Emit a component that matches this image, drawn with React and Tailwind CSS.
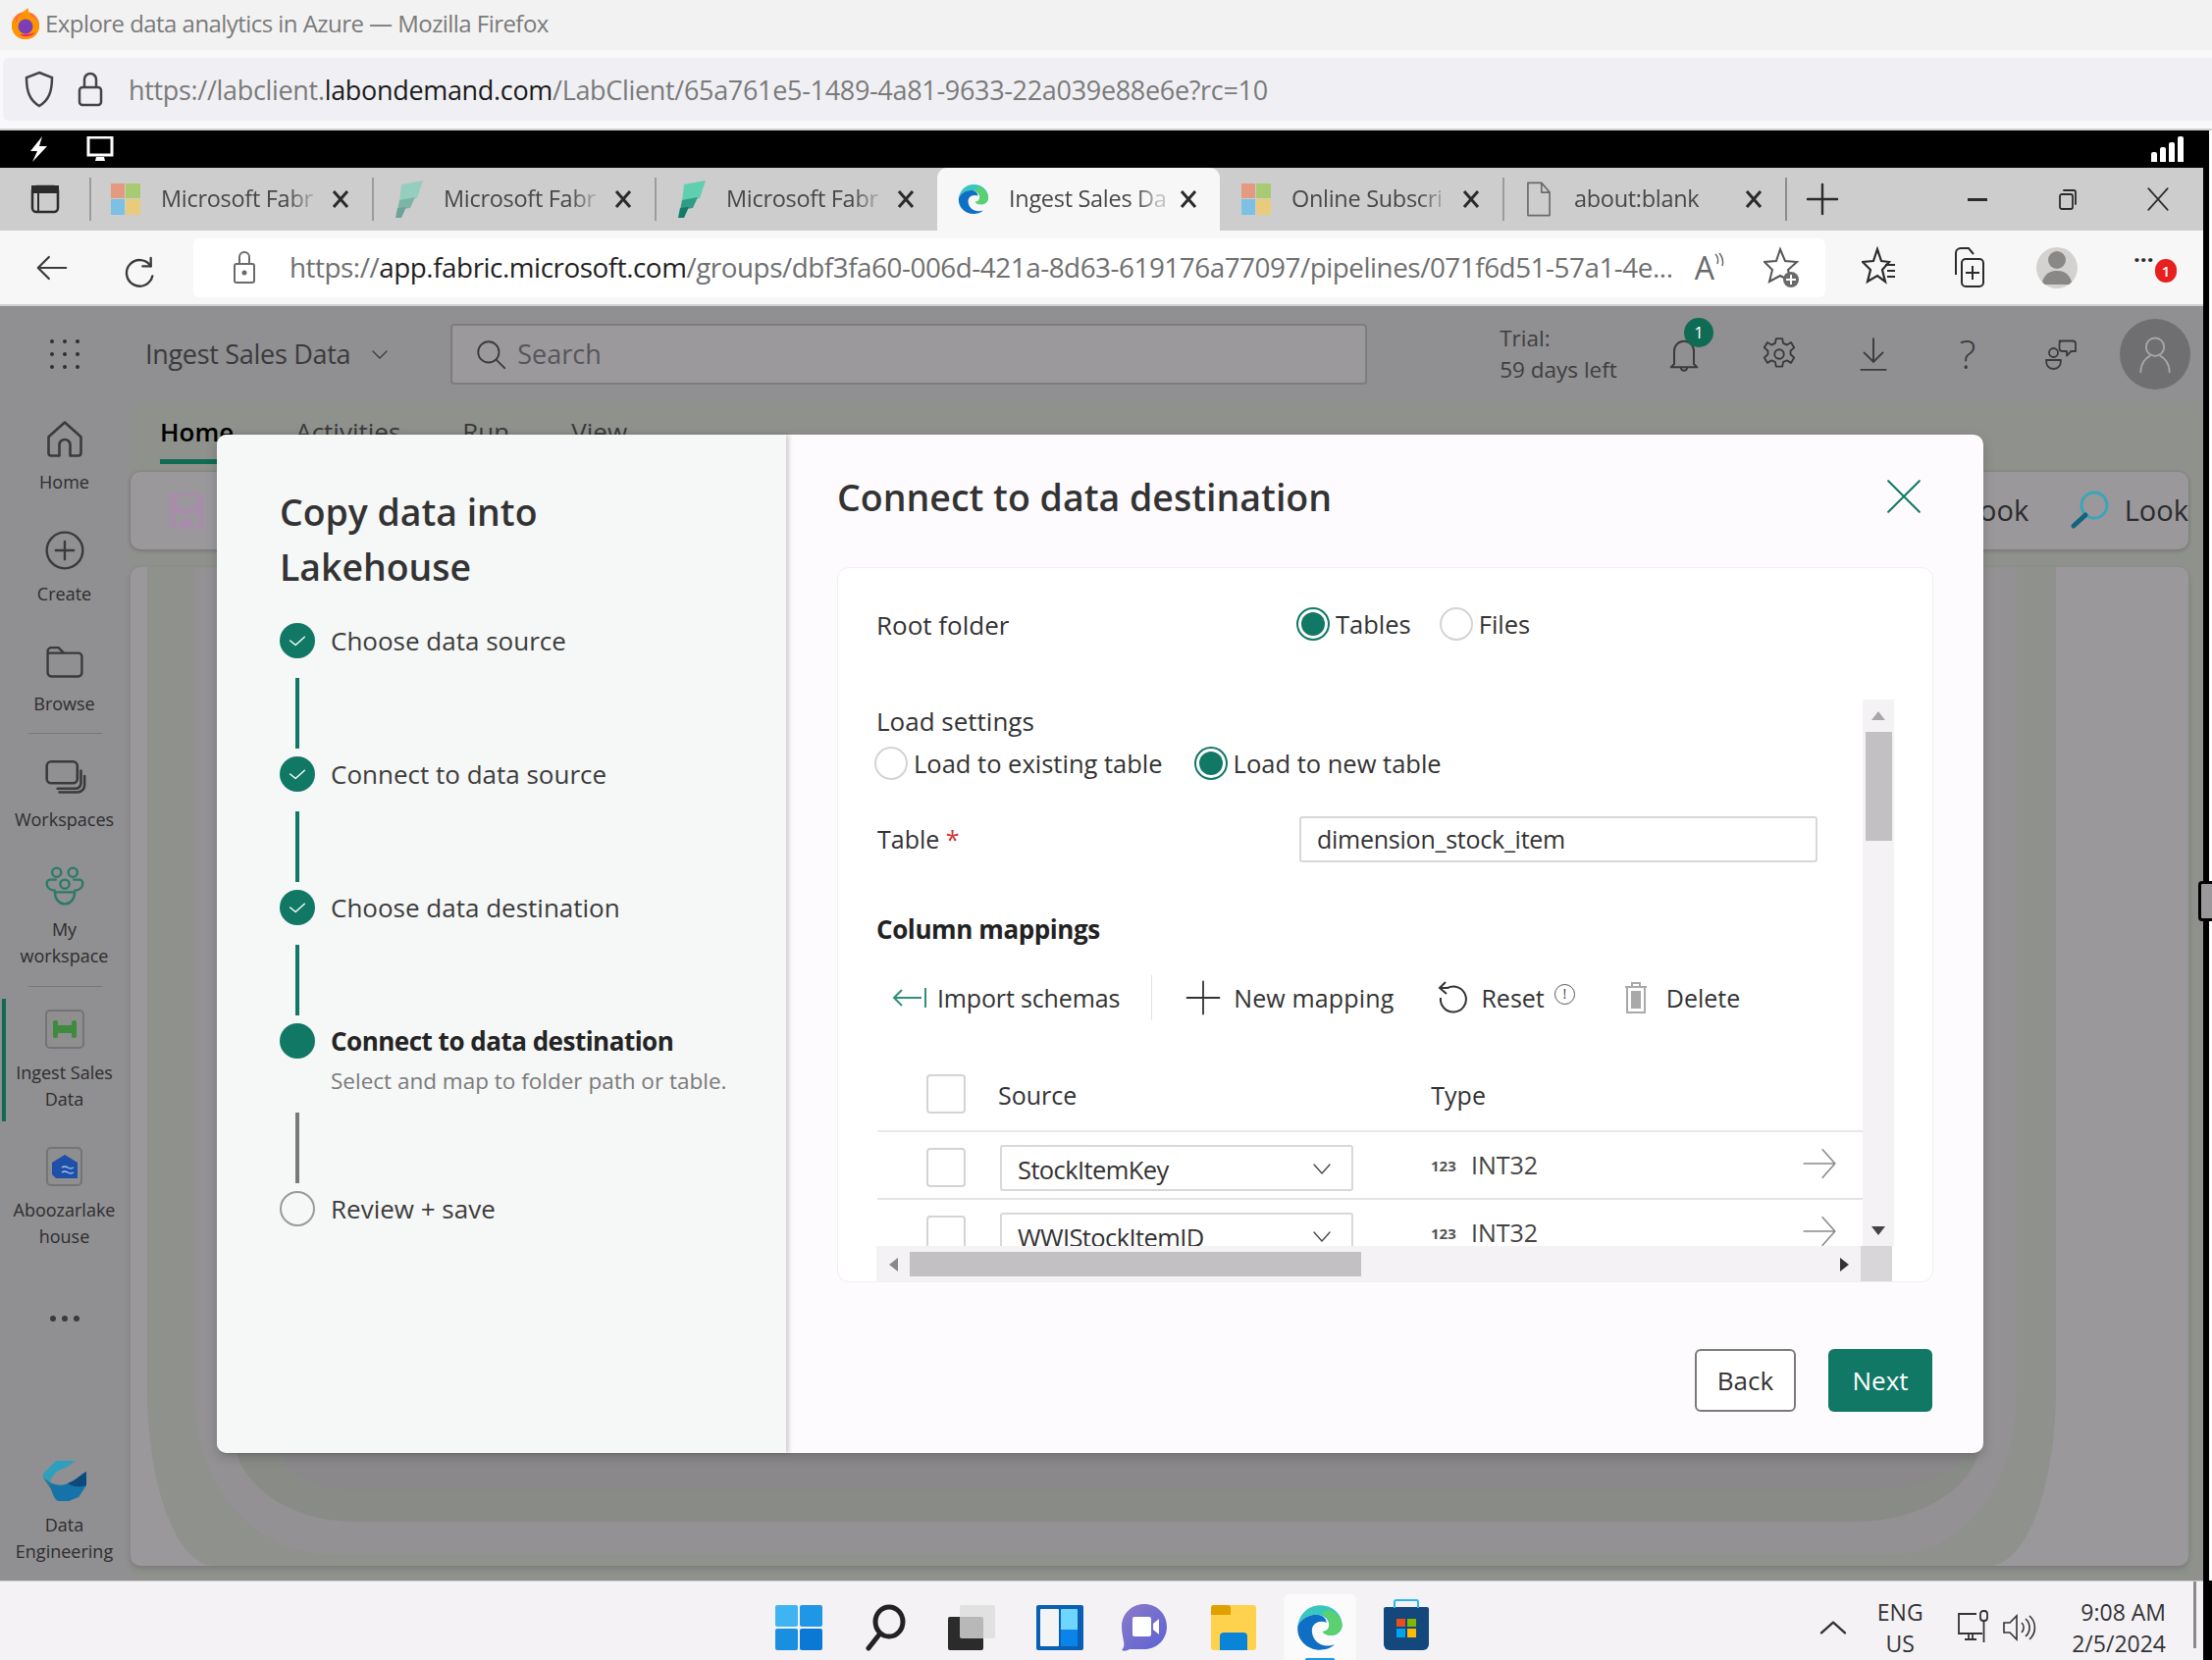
import React from 'react'

const font = "font-['Open_Sans','Noto_Sans',sans-serif]"

// small helpers for the browser chrome logos
const MsLogo = () => (
  <svg width="30" height="32" viewBox="0 0 30 32">
    <rect x="0" y="0" width="14" height="15" fill="#e49a80" />
    <rect x="15" y="0" width="15" height="15" fill="#a8cb72" />
    <rect x="0" y="16" width="14" height="16" fill="#7cc0e4" />
    <rect x="15" y="16" width="15" height="16" fill="#e9cb7c" />
  </svg>
)

const FabricLogo = ({ faded }) => (
  <svg width="30" height="38" viewBox="0 0 30 38" className={faded ? 'opacity-50' : ''}>
    <path d="M8 4 L30 0 L24 18 L6 22 Z" fill="#5fcfb0" />
    <path d="M6 20 L22 17 L17 28 L4 30 Z" fill="#2f9c84" />
    <path d="M4 28 L13 27 L8 38 L2 38 Z" fill="#127a68" />
  </svg>
)

const EdgeLogo = ({ size = 36 }) => (
  <svg width={size} height={size} viewBox="0 0 36 36">
    <path d="M18 1c10 0 17 7 17 15 0 5-4 8-8 8-3 0-6-1-7-3 3 0 5-2 5-5 0-5-5-8-10-8C9 8 3 12 1 17 2 8 9 1 18 1z" fill="#38c7c0" />
    <path d="M27 5c5 3 8 7 8 11 0 5-4 8-8 8-3 0-6-1-7-3 3 0 5-2 5-5 0-4-2-7-6-9 3-2 6-3 8-2z" fill="#5ad06f" />
    <path d="M1 17C3 12 9 8 15 8c5 0 8 3 8 6-6-2-12 1-11 8 1 7 8 12 17 9-3 3-7 4-11 4C8 35 0 27 1 17z" fill="#0f6fc4" />
  </svg>
)

const CloseX = () => (
  <svg width="20" height="22" viewBox="0 0 20 22" stroke="#2b2b2b" strokeWidth="3" fill="none" className="shrink-0">
    <path d="M3 3 L17 19 M17 3 L3 19" />
  </svg>
)

const Line = ({ children, className = '', d, w = 34, h = 34, vb = '0 0 24 24', sw = 1.5, color = '#4a4a4c' }) => (
  <svg width={w} height={h} viewBox={vb} fill="none" stroke={color} strokeWidth={sw} strokeLinecap="round" strokeLinejoin="round" className={className}>
    {d ? <path d={d} /> : children}
  </svg>
)

const tabs = [
  { title: 'Microsoft Fabr', logo: <MsLogo /> },
  { title: 'Microsoft Fabr', logo: <FabricLogo faded /> },
  { title: 'Microsoft Fabr', logo: <FabricLogo /> },
  { title: 'Ingest Sales Da', logo: <EdgeLogo size={32} />, active: true },
  { title: 'Online Subscri', logo: <MsLogo /> },
  {
    title: 'about:blank',
    logo: <Line w={28} h={36} vb="0 0 20 26" sw={1.2} color="#6a6a6a" d="M2 1h10l6 7v17H2zM12 1v7h6" />,
  },
]

const TabBar = () => (
  <div className="h-[64px] bg-[#cdcdcd] flex items-center">
    <div className="w-[91px] flex justify-center">
      <svg width="30" height="30" viewBox="0 0 30 30" fill="none" stroke="#2b2b2b">
        <rect x="2" y="2" width="26" height="26" rx="4" strokeWidth="2.5" />
        <rect x="2" y="2" width="26" height="6" fill="#2b2b2b" strokeWidth="2" />
        <path d="M8 8v20" strokeWidth="2" />
      </svg>
    </div>
    {tabs.map((t, i) => (
      <div
        key={i}
        className={`w-[288px] h-full flex items-center pl-[20px] pr-[22px] relative ${t.active ? 'bg-[#f7f7f7] rounded-t-[10px]' : ''}`}
      >
        {!t.active && !tabs[i - 1]?.active && <div className="absolute left-0 top-[10px] w-[2px] h-[44px] bg-[#9c9c9c]" />}
        <span className="w-[34px] flex justify-center shrink-0">{t.logo}</span>
        <span className="ml-[19px] flex-1 text-[23.5px] tracking-[-0.3px] text-[#48484a] whitespace-nowrap [mask-image:linear-gradient(to_right,black_75%,rgba(0,0,0,0.3)_88%)]">
          {t.title}
        </span>
        <CloseX />
      </div>
    ))}
    <div className="w-[2px] h-[44px] bg-[#8c8c8c]" />
    <div className="ml-[18px]">
      <Line w={36} h={36} sw={1.6} color="#2b2b2b" d="M12 2v20M2 12h20" />
    </div>
    <div className="ml-auto flex items-center">
      <div className="w-[92px] flex justify-center">
        <div className="w-[20px] h-[3px] bg-[#2b2b2b]" />
      </div>
      <div className="w-[92px] flex justify-center">
        <Line w={24} h={26} sw={1.8} color="#2b2b2b">
          <rect x="4" y="7" width="13" height="15" rx="2" />
          <path d="M8 3h10a2 2 0 0 1 2 2v12" />
        </Line>
      </div>
      <div className="w-[92px] flex justify-center">
        <Line w={26} h={28} sw={1.6} color="#2b2b2b" d="M3 2l18 20M21 2L3 22" />
      </div>
    </div>
  </div>
)

const AddressBar = () => (
  <div className="h-[77px] bg-[#f7f7f7] flex items-center border-b-2 border-b-[#d2d2d2]">
    <div className="w-[197px] flex items-center pl-[34px] gap-[50px]">
      <Line w={38} h={38} sw={1.4} color="#3a3a3a" d="M21 12H3M10 5l-7 7 7 7" />
      <Line w={40} h={40} sw={1.4} color="#3a3a3a">
        <path d="M19 6v5h-5" />
        <path d="M19 11a8 8 0 1 0 1 6" />
      </Line>
    </div>
    <div className="w-[1663px] h-[60px] bg-white rounded-[6px] flex items-center">
      <div className="w-[98px] pl-[40px]">
        <svg width="24" height="34" viewBox="0 0 24 34" fill="none" stroke="#6a6a6a" strokeWidth="2">
          <rect x="2" y="13" width="20" height="19" rx="2" />
          <path d="M7 13V6a5 5 0 0 1 10 0v7" />
          <circle cx="12" cy="22" r="1.5" fill="#6a6a6a" />
        </svg>
      </div>
      <div className="text-[27.8px] tracking-[-0.45px] text-[#6f6f6f] whitespace-nowrap">
        https://<span className="text-[#1f1f1f]">app.fabric.microsoft.com</span>/groups/dbf3fa60-006d-421a-8d63-619176a77097/pipelines/071f6d51-57a1-4e...
      </div>
      <div className="ml-auto flex items-center gap-[38px] pr-[25px]">
        <span className="flex items-start text-[32px] leading-none text-[#6a6a6a]">
          A
          <svg width="12" height="18" viewBox="0 0 12 18" fill="none" stroke="#6a6a6a" strokeWidth="1.5">
            <path d="M1 2q4 4 2 10M5 1q5 6 3 13" />
          </svg>
        </span>
        <svg width="38" height="44" viewBox="0 0 38 44" fill="none" stroke="#555" strokeWidth="2">
          <path d="M17 3l5 12 12 1-9 8 3 12-11-6-11 6 3-12-8-8 12-1z" />
          <circle cx="28" cy="34" r="8" fill="#6a6a6a" stroke="none" />
          <path d="M28 29v10M23 34h10" stroke="#fff" />
        </svg>
      </div>
    </div>
    <div className="flex-1 flex items-center gap-[50px] pl-[37px]">
      <svg width="38" height="44" viewBox="0 0 38 44" fill="none" stroke="#2b2b2b" strokeWidth="2.2">
        <path d="M16 3l4 12 8 1-7 8 3 12-8-6-10 6 3-12-8-8 11-1z" />
        <path d="M24 19h10M26 25h8M26 31h8" />
      </svg>
      <svg width="40" height="46" viewBox="0 0 40 46" fill="none" stroke="#2b2b2b" strokeWidth="2">
        <path d="M8 30V8a5 5 0 0 1 5-5h8l5 6" />
        <rect x="14" y="14" width="22" height="28" rx="4" />
        <path d="M25 21v14M18 28h14" />
      </svg>
      <div className="w-[42px] h-[42px] rounded-full bg-[#d4d2d0] flex flex-col items-center justify-center overflow-hidden">
        <div className="w-[18px] h-[18px] rounded-full bg-[#8a8886]" />
        <div className="w-[30px] h-[14px] rounded-t-full bg-[#8a8886] mt-[2px]" />
      </div>
      <div className="relative w-[44px] h-[30px] ml-[5px]">
        <span className="absolute left-[2px] top-[-6px] text-[24px] font-bold leading-none text-[#2b2b2b]">···</span>
        <span className="absolute right-[-2px] top-[6px] w-[22px] h-[24px] rounded-full bg-[#e81f1f] text-white text-[15px] leading-[24px] text-center font-semibold">1</span>
      </div>
    </div>
  </div>
)

const NavItem = ({ icon, label, className = '' }) => (
  <div className={`flex flex-col items-center pr-[2px] ${className}`}>
    <div className="h-[44px] flex items-center justify-center">{icon}</div>
    <div className="mt-[9px] text-[18px] leading-[27px] text-[#2d2d2f] text-center w-[131px]">
      {label.map((l) => (
        <div key={l}>{l}</div>
      ))}
    </div>
  </div>
)

const Sidebar = () => (
  <div className="relative w-[133px] h-full flex flex-col pt-[15px] shrink-0">
    <NavItem
      label={['Home']}
      icon={<Line w={44} h={44} sw={1.4} color="#3a3a3c" d="M3 11l9-8 9 8v9a1.5 1.5 0 0 1-1.5 1.5H15v-6a3 3 0 0 0-6 0v6H4.500A1.500 1.500 0 0 1 3 20z" />}
    />
    <NavItem
      className="mt-[34px]"
      label={['Create']}
      icon={
        <Line w={44} h={44} sw={1.3} color="#3a3a3c">
          <circle cx="12" cy="12" r="10" />
          <path d="M12 7v10M7 12h10" />
        </Line>
      }
    />
    <NavItem
      className="mt-[32px]"
      label={['Browse']}
      icon={<Line w={44} h={44} sw={1.3} color="#3a3a3c" d="M2.500 7a2 2 0 0 1 2-2h4l3 3h8a2 2 0 0 1 2 2v9a2 2 0 0 1-2 2h-15a2 2 0 0 1-2-2zM2.500 8h9" />}
    />
    <div className="mt-[16px] mx-[29px] h-px bg-[#77767a]" />
    <NavItem
      className="mt-[21px]"
      label={['Workspaces']}
      icon={
        <Line w={44} h={44} sw={1.4} color="#3a3a3c">
          <rect x="2" y="4" width="17" height="12" rx="2.500" />
          <path d="M21 9v7a3 3 0 0 1-3 3H8" />
          <path d="M23 12v5a4 4 0 0 1-4 4H9" />
        </Line>
      }
    />
    <NavItem
      className="mt-[32px]"
      label={['My', 'workspace']}
      icon={
        <Line w={44} h={44} sw={1.3} color="#2b7a68">
          <circle cx="7.500" cy="4.500" r="2.500" />
          <circle cx="16.500" cy="4.500" r="2.500" />
          <circle cx="12" cy="11" r="2.500" />
          <path d="M7 8.500H4a2 2 0 0 0-2 2c0 2.500 2 4 4.500 4M17 8.500h3a2 2 0 0 1 2 2c0 2.500-2 4-4.500 4" />
          <path d="M6.500 15.500h11c0 4-2.500 6.500-5.500 6.500s-5.500-2.500-5.500-6.500z" />
        </Line>
      }
    />
    <div className="mt-[17px] mx-[29px] h-px bg-[#77767a]" />
    <NavItem
      className="mt-[21px]"
      label={['Ingest Sales', 'Data']}
      icon={
        <div className="w-[40px] h-[40px] rounded-[5px] border-2 border-[#747476] bg-[#8f8f8f] flex items-center justify-center">
          <svg width="26" height="20" viewBox="0 0 26 20" fill="#3f8a3f">
            <rect x="1" y="1" width="5" height="18" rx="2" />
            <rect x="20" y="1" width="5" height="18" rx="2" />
            <rect x="5" y="6" width="16" height="8" />
          </svg>
        </div>
      }
    />
    <NavItem
      className="mt-[33px]"
      label={['Aboozarlake', 'house']}
      icon={
        <div className="w-[37px] h-[40px] rounded-[5px] border-2 border-[#747476] bg-[#8f8f8f] flex items-center justify-center">
          <svg width="28" height="26" viewBox="0 0 28 26">
            <path d="M1 9L14 1l13 8v16H5l-4-4z" fill="#1f4fa8" />
            <path d="M11 14q3-2 6 0t6 0M11 19q3-2 6 0t6 0" stroke="#9cc4ea" strokeWidth="1.500" fill="none" />
          </svg>
        </div>
      }
    />
    <div className="mt-[67px] flex justify-center gap-[6px] pr-[2px]">
      <span className="w-[6px] h-[6px] rounded-full bg-[#3a3a3c]" />
      <span className="w-[6px] h-[6px] rounded-full bg-[#3a3a3c]" />
      <span className="w-[6px] h-[6px] rounded-full bg-[#3a3a3c]" />
    </div>
    <NavItem
      className="mt-auto mb-[16px]"
      label={['Data', 'Engineering']}
      icon={
        <svg width="46" height="44" viewBox="0 0 46 44">
          <path d="M14 1h20L24 8C16 10 10 15 8 23L1 18V14z" fill="#2f9fbe" />
          <path d="M1 18l7 5c1 5 3 9 6 12l-1 1z" fill="#26788f" />
          <path d="M45 12v14l-8 12-10 4H16C12 40 9 32 8 23c6 3 12 4 18 1 6-2 11-7 19-12z" fill="#1573a8" />
          <path d="M45 12v14c-6 2-13 2-19-2 6-2 11-7 19-12z" fill="#0c4a7e" />
        </svg>
      }
    />
    <div className="absolute left-[2px] top-[608px] w-[4px] h-[125px] bg-[#0f6b54]" />
  </div>
)

const Workspace = () => (
  <div className="flex-1 h-full flex flex-col bg-[#8f918d] pr-[15px]">
    <div className="h-[71px] pl-[30px] flex items-start pt-[11px] gap-[63px] text-[26px] text-[#3a3a3c]">
      <div className="relative font-semibold text-black">
        Home
        <div className="absolute left-0 top-[47px] w-[76px] h-[5px] bg-[#0f6b54]" />
      </div>
      <div>Activities</div>
      <div>Run</div>
      <div>View</div>
    </div>
    <div className="h-[79px] rounded-[10px] bg-[#9a989b] flex items-center shadow-[0_1px_4px_rgba(0,0,0,0.25)]">
      <div className="ml-[39px]">
        <svg width="36" height="36" viewBox="0 0 36 36" fill="#a68ea9">
          <path d="M0 0h36v36H4l-4-4z" />
          <rect x="9" y="3" width="18" height="11" fill="#9a989b" />
          <rect x="7" y="21" width="22" height="12" fill="#9a989b" />
          <rect x="12" y="25" width="12" height="8" fill="#a68ea9" />
        </svg>
      </div>
      <div className="ml-auto flex items-center text-[29px] text-[#2b2b2d] overflow-hidden w-[213px] mt-[-2px]">
        <span className="w-[110px]">ook</span>
        <svg width="42" height="42" viewBox="0 0 42 42" fill="none" className="shrink-0">
          <circle cx="25" cy="16" r="13" stroke="#38a6bb" strokeWidth="3" />
          <path d="M16 26L4 37" stroke="#12647c" strokeWidth="5" strokeLinecap="round" />
        </svg>
        <span className="ml-[14px] whitespace-nowrap">Look</span>
      </div>
    </div>
    <div className="relative mt-[18px] flex-1 mb-[15px] rounded-[10px] bg-[#9a989b] overflow-hidden shadow-[0_3px_6px_rgba(0,0,0,0.15)]">
      {/* soft background bands behind the dialog */}
      <div className="absolute left-[17px] right-[135px] top-0 bottom-0 rounded-bl-[68px_180px] rounded-br-[68px_180px] bg-[#8f918d]" />
      <div className="absolute left-[65px] right-[175px] top-0 bottom-[12px] rounded-bl-[135px_160px] rounded-br-[122px_160px] bg-[#939193]" />
      <div className="absolute left-[105px] right-[210px] top-0 bottom-[45px] rounded-bl-[122px_90px] rounded-br-[129px_90px] bg-[#898b87]" />
      <div className="absolute left-[153px] right-[230px] top-0 bottom-[78px] rounded-bl-[74px_40px] rounded-br-[100px_40px] bg-[#8a888a]" />
    </div>
  </div>
)

const Step = ({ label, sub, state }) => (
  <div className="flex items-start">
    <div className="w-[36px] flex justify-center shrink-0">
      {state === 'done' && (
        <div className="w-[36px] h-[36px] rounded-full bg-[#117865] flex items-center justify-center">
          <Line w={22} h={22} sw={1.500} color="#ffffff" d="M4 12l6 5 10-9" />
        </div>
      )}
      {state === 'active' && <div className="w-[36px] h-[36px] rounded-full bg-[#117865]" />}
      {state === 'todo' && <div className="w-[36px] h-[36px] rounded-full border-2 border-[#9a9a9a]" />}
    </div>
    <div className="ml-[16px]">
      <div className={`text-[26px] leading-[36px] ${state === 'active' ? 'font-bold text-[#242424] tracking-[-0.5px]' : 'text-[#3c3c3c]'}`}>{label}</div>
      {sub && <div className="mt-[9px] text-[22.5px] leading-[28px] text-[#7a7a7a] whitespace-nowrap">{sub}</div>}
    </div>
  </div>
)

const Connector = ({ className, color = 'bg-[#117865]' }) => (
  <div className={`ml-[16px] w-[4px] h-[72px] ${color} ${className}`} />
)

const StepPanel = () => (
  <div className="w-[580px] shrink-0 h-full bg-[#f6f7f7] rounded-l-[10px] pl-[64px] pt-[51px] shadow-[3px_0_4px_rgba(0,0,0,0.18)] relative">
    <div className="text-[37.4px] leading-[56px] font-semibold text-[#333]">
      Copy data into
      <br />
      Lakehouse
    </div>
    <div className="mt-[29px]">
      <Step state="done" label="Choose data source" />
      <Connector className="mt-[20px] mb-[8px]" />
      <Step state="done" label="Connect to data source" />
      <Connector className="mt-[20px] mb-[8px]" />
      <Step state="done" label="Choose data destination" />
      <Connector className="mt-[20px] mb-[8px]" />
      <Step state="active" label="Connect to data destination" sub="Select and map to folder path or table." />
      <Connector className="mt-[18px] mb-[8px]" color="bg-[#7a7a7a]" />
      <Step state="todo" label="Review + save" />
    </div>
  </div>
)

const Radio = ({ label, checked }) => (
  <div className="flex items-center">
    {checked ? (
      <div className="w-[34px] h-[34px] rounded-full border-[2px] border-[#117865] bg-white flex items-center justify-center">
        <div className="w-[24px] h-[24px] rounded-full bg-[#117865]" />
      </div>
    ) : (
      <div className="w-[34px] h-[34px] rounded-full border-[2px] border-[#d4d4d4] bg-white" />
    )}
    <span className="ml-[6px] text-[25.5px] text-[#333]">{label}</span>
  </div>
)

const Checkbox = () => <div className="w-[40px] h-[40px] rounded-[4px] border-2 border-[#d4d4d4] bg-white shrink-0" />

const MappingRow = ({ name, clipped }) => (
  <div className={`h-[69px] flex items-start shrink-0 ${clipped ? '' : 'border-b-2 border-b-[#e4e4e4]'}`}>
    <div className="ml-[50px] mt-[16px]">
      <Checkbox />
    </div>
    <div className="ml-[35px] mt-[13px] w-[360px] h-[47px] rounded-[3px] border-2 border-[#d8d8d8] bg-white flex items-center pl-[16px] pr-[18px] text-[25.5px] text-[#333]">
      <span className="tracking-[-0.6px] mt-[2px]">{name}</span>
      <span className="ml-auto">
        <Line w={24} h={24} sw={1.300} color="#444" d="M4 8l8 9 8-9" />
      </span>
    </div>
    <div className="ml-[77px] mt-[15px] flex items-center text-[25px] text-[#444]">
      <span className="text-[15px] font-bold text-[#555] w-[43px] pl-[2px]">123</span>
      <span>INT32</span>
    </div>
    <div className="ml-auto mr-[25px] mt-[13px]">
      <Line w={38} h={38} sw={1} color="#8a8a8a" d="M2 12h20M14 3l8 9-8 9" />
    </div>
  </div>
)

const Toolbar = () => (
  <div className="mt-[31px] h-[44px] flex items-center text-[25px] text-[#333]">
    <div className="ml-[15px]">
      <svg width="36" height="22" viewBox="0 0 36 22" fill="none" stroke="#2f8f78" strokeWidth="2">
        <path d="M34 1v20M30 11H2M10 3l-8 8 8 8" />
      </svg>
    </div>
    <span className="ml-[10px] tracking-[-0.15px]">Import schemas</span>
    <div className="ml-[32px] w-px h-[46px] bg-[#e2e2e2]" />
    <div className="ml-[34px]">
      <Line w={36} h={36} sw={1.200} color="#333" d="M12 1v22M1 12h22" />
    </div>
    <span className="ml-[13px] tracking-[0.15px]">New mapping</span>
    <div className="ml-[43px]">
      <svg width="34" height="36" viewBox="0 0 34 36" fill="none" stroke="#333" strokeWidth="2">
        <path d="M4 8h8a13 13 0 1 1-7 10M10 2L4 8l7 6" />
      </svg>
    </div>
    <span className="ml-[12px]">Reset</span>
    <div className="ml-[10px] mt-[-8px] w-[21px] h-[21px] rounded-full border border-[#555] text-[14px] leading-[18px] text-center text-[#444]">!</div>
    <div className="ml-[48px]">
      <svg width="28" height="34" viewBox="0 0 28 34" fill="none" stroke="#a9a9a9" strokeWidth="2">
        <path d="M3 6h22M10 6V2h8v4M5 6v26h18V6" />
        <rect x="9" y="10" width="10" height="18" fill="#a9a9a9" stroke="none" />
      </svg>
    </div>
    <span className="ml-[17px]">Delete</span>
  </div>
)

const Card = () => (
  <div className="mt-[46px] w-[1117px] h-[729px] rounded-[12px] bg-white border border-[#f1eff1] flex flex-col overflow-hidden shrink-0">
    <div className="h-[134px] pl-[39px] pt-[38px] flex items-start shrink-0">
      <div className="w-[431px] text-[26px] leading-[40px] text-[#333]">Root folder</div>
      <div className="flex items-center gap-[29px] ml-[-3px]">
        <Radio label="Tables" checked />
        <Radio label="Files" />
      </div>
    </div>
    <div className="flex h-[557px] pl-[26px] shrink-0">
      <div className="w-[1018px] h-full overflow-hidden">
        <div className="pl-[13px] pt-[5px] text-[26px] leading-[34px] text-[#333]">Load settings</div>
        <div className="pl-[11px] mt-[7px] flex items-center gap-[32px]">
          <Radio label="Load to existing table" />
          <Radio label="Load to new table" checked />
        </div>
        <div className="pl-[14px] mt-[35px] flex items-center">
          <div className="w-[430px] text-[25px] text-[#333]">
            Table <span className="text-[#d13438]">*</span>
          </div>
          <div className="w-[528px] h-[47px] rounded-[3px] border-2 border-[#d8d8d8] flex items-center pl-[16px] text-[25px] text-[#333] tracking-[-0.25px]">
            dimension_stock_item
          </div>
        </div>
        <div className="pl-[13px] mt-[51px] text-[26px] leading-[34px] font-bold text-[#222] tracking-[-0.4px]">Column mappings</div>
        <div className="pl-[14px]">
          <Toolbar />
        </div>
        <div className="ml-[14px]">
          <div className="mt-[39px] h-[76px] border-b-2 border-b-[#e8e8e8] flex items-start text-[25px] text-[#333]">
            <div className="ml-[50px] mt-[17px]">
              <Checkbox />
            </div>
            <span className="ml-[33px] mt-[20px]">Source</span>
            <span className="ml-[361px] mt-[20px]">Type</span>
          </div>
          <MappingRow name="StockItemKey" />
          <MappingRow name="WWIStockItemID" clipped />
        </div>
      </div>
      <div className="w-[32px] h-full bg-[#f5f2f6] flex flex-col items-center pt-[12px] shrink-0">
        <div className="w-0 h-0 border-x-[7px] border-x-transparent border-b-[9px] border-b-[#a8a8a8]" />
        <div className="mt-[12px] w-[27px] h-[111px] bg-[#c2c0c3]" />
        <div className="mt-auto mb-[11px] w-0 h-0 border-x-[7px] border-x-transparent border-t-[9px] border-t-[#444]" />
      </div>
    </div>
    <div className="h-[37px] ml-[39px] mr-[41px] flex items-center bg-[#f5f2f6] shrink-0">
      <div className="w-[34px] flex justify-center">
        <div className="w-0 h-0 border-y-[7px] border-y-transparent border-r-[9px] border-r-[#888]" />
      </div>
      <div className="w-[460px] h-[25px] bg-[#c2c0c3]" />
      <div className="flex-1 flex justify-end pr-[12px]">
        <div className="w-0 h-0 border-y-[7px] border-y-transparent border-l-[9px] border-l-[#333]" />
      </div>
      <div className="w-[32px] h-full bg-[#d8d6d8]" />
    </div>
  </div>
)

const Dialog = () => (
  <div className={`absolute left-[221px] top-[443px] w-[1800px] h-[1038px] rounded-[10px] bg-[#fdfbfd] flex shadow-[0_4px_12px_rgba(0,0,0,0.18)] ${font}`}>
    <StepPanel />
    <div className="flex-1 flex flex-col pl-[52px] pt-[39px]">
      <div className="h-[50px] flex items-center justify-between pr-[62px]">
        <h1 className="text-[37.5px] leading-[50px] font-semibold text-[#333]">Connect to data destination</h1>
        <Line className="mt-[-3px]" w={38} h={38} sw={1.300} color="#117865" d="M2 2l20 20M22 2L2 22" />
      </div>
      <Card />
      <div className="mt-[68px] flex justify-end gap-[33px] pr-[52px]">
        <button className="w-[103px] h-[64px] rounded-[6px] border-2 border-[#7a7a7a] bg-white text-[26px] text-[#333]">Back</button>
        <button className="w-[106px] h-[64px] rounded-[6px] bg-[#117865] text-[26px] text-white">Next</button>
      </div>
    </div>
  </div>
)

const Taskbar = () => (
  <div className="h-[81px] pt-[13px] bg-[#f5f2f6] flex items-center relative border-t border-t-[#cfcfcf]">
    <div className="ml-[790px] flex items-center gap-[42px]">
      {/* start */}
      <svg width="48" height="46" viewBox="0 0 48 46">
        <rect width="23" height="22" rx="2" fill="#3fb4f0" />
        <rect x="25" width="23" height="22" rx="2" fill="#1f96e6" />
        <rect y="24" width="23" height="22" rx="2" fill="#1a8fe0" />
        <rect x="25" y="24" width="23" height="22" rx="2" fill="#0a78d4" />
      </svg>
      {/* search */}
      <svg width="44" height="48" viewBox="0 0 44 48" fill="none">
        <ellipse cx="26" cy="18" rx="14" ry="15" stroke="#222" strokeWidth="5" fill="#f5f2f6" />
        <path d="M16 31L5 45" stroke="#222" strokeWidth="5" strokeLinecap="round" />
      </svg>
      {/* task view */}
      <div className="relative w-[48px] h-[46px]">
        <div className="absolute left-0 bottom-0 w-[36px] h-[34px] rounded-[2px] bg-[#2b2b2b]" />
        <div className="absolute right-0 top-0 w-[36px] h-[34px] rounded-[2px] bg-[#dcdcdc]/80" />
      </div>
      {/* widgets */}
      <div className="w-[48px] h-[46px] rounded-[2px] bg-[#0a5fb4] flex gap-[2px] p-[4px]">
        <div className="w-[19px] bg-[#f4f4f4] rounded-[1px]" />
        <div className="w-[17px] rounded-[1px] bg-[linear-gradient(#6fd6ff_55%,#0a84e8_55%)]" />
      </div>
      {/* chat */}
      <svg className="ml-[-3px] mr-[3px]" width="46" height="48" viewBox="0 0 46 48">
        <defs>
          <linearGradient id="chat" x1="0" y1="0" x2="1" y2="1">
            <stop offset="0" stopColor="#8d7ac8" />
            <stop offset="1" stopColor="#5a62d4" />
          </linearGradient>
        </defs>
        <path d="M23 0c13 0 23 10 23 23S36 46 23 46H8c-3 2-6 2-8 1 2-2 3-5 2-9C1 33 0 28 0 23 0 10 10 0 23 0z" fill="url(#chat)" />
        <rect x="11" y="13" width="19" height="20" rx="2" fill="#fff" />
        <path d="M32 20l6-5v16l-6-5z" fill="#fff" />
      </svg>
      {/* explorer */}
      <div className="relative w-[46px] h-[46px] rounded-[3px] bg-[#ffd24d]">
        <div className="absolute left-0 top-0 w-[20px] h-[10px] rounded-t-[3px] bg-[#e0a000]" />
        <div className="absolute left-[9px] bottom-0 w-[28px] h-[18px] rounded-t-[4px] bg-[#0a84d6]" />
      </div>
      {/* edge */}
      <div className="relative w-[74px] h-[68px] mx-[-14px] rounded-[6px] bg-white/70 flex items-center justify-center">
        <EdgeLogo size={48} />
        <div className="absolute bottom-0 left-[22px] w-[30px] h-[3px] bg-[#1f96e6] rounded-full" />
      </div>
      {/* store */}
      <div className="relative w-[46px] h-[44px] mt-[2px] rounded-b-[6px] rounded-t-[2px] bg-[#14487c] grid grid-cols-2 gap-[2px] p-[13px] pt-[12px]">
        <div className="bg-[#e94f1d]" />
        <div className="bg-[#7fba00]" />
        <div className="bg-[#00a4ef]" />
        <div className="bg-[#ffb900]" />
        <div className="absolute left-[10px] top-[-8px] w-[26px] h-[9px] border-2 border-b-0 border-[#29b6f0] rounded-t-[3px]" />
      </div>
    </div>
    <div className="ml-auto flex items-center pr-[38px] text-[#333]">
      <Line w={32} h={32} sw={1.800} color="#333" d="M3 16l9-8 9 8" />
      <div className="ml-[22px] w-[60px] text-center text-[23px] leading-[32px]">
        ENG
        <br />
        US
      </div>
      <div className="ml-[28px] flex items-center gap-[12px]">
        <svg width="34" height="36" viewBox="0 0 34 36" fill="none" stroke="#333" strokeWidth="1.800">
          <path d="M20 4H2v20h24M8 30h12M12 24v6M16 24v6" />
          <rect x="24" y="1" width="7" height="10" rx="3" />
          <path d="M27.500 11v22" />
        </svg>
        <svg width="36" height="30" viewBox="0 0 36 30" fill="none" stroke="#333" strokeWidth="1.600">
          <path d="M2 10h6l7-7v24l-7-7H2z" />
          <path d="M20 10a7 7 0 0 1 0 10M24 6a12 12 0 0 1 0 18M28 3a16 16 0 0 1 0 24" />
        </svg>
      </div>
      <div className="ml-[35px] text-[23px] leading-[32px] text-right">
        9:08 AM
        <br />
        2/5/2024
      </div>
    </div>
    <div className="absolute right-[7px] top-0 w-[3px] h-[68px] bg-[#8a8a8a]" />
  </div>
)

export default function App() {
  return (
    <div className={`relative w-[2254px] h-[1692px] overflow-hidden bg-white flex flex-col ${font}`}>
      {/* Firefox title */}
      <div className="h-[51px] bg-[#f2f2f2] flex items-center pl-[10px] pb-[3px]">
        <svg width="32" height="36" viewBox="0 0 32 34">
          <circle cx="16" cy="19" r="14" fill="#ff7139" />
          <path d="M16 33C8 33 2 27 2 19c0-3 1-6 3-8 0 3 1 4 2 5 1-6 5-10 12-15-1 4 1 6 4 9 4 3 7 5 7 9 0 8-6 14-14 14z" fill="#ff9500" />
          <circle cx="16" cy="20" r="7.500" fill="#7b3fb5" />
          <path d="M10 28a12 12 0 0 0 16-2c-5 2-11 2-16 2z" fill="#e62a6e" />
        </svg>
        <span className="ml-[4px] text-[24px] text-[#7a7a7a] tracking-[-0.55px]">Explore data analytics in Azure — Mozilla Firefox</span>
      </div>

      {/* Firefox url bar */}
      <div className="h-[80px] bg-[#f9f9fb] py-[8px] pl-[3px]">
        <div className="h-[64px] bg-[#f0f0f4] rounded-l-[6px] flex items-center pl-[21px]">
          <svg width="32" height="38" viewBox="0 0 32 38" fill="none" stroke="#444" strokeWidth="2.500">
            <path d="M16 2l13 5c0 14-3 23-13 29C6 30 3 21 3 7z" />
          </svg>
          <svg className="ml-[23px]" width="26" height="36" viewBox="0 0 26 36" fill="none" stroke="#444" strokeWidth="2.500">
            <rect x="2" y="16" width="22" height="18" rx="3" />
            <path d="M7 16V8a6 6 0 0 1 12 0v8" />
          </svg>
          <div className="ml-[26px] mt-[2px] text-[27px] tracking-[-0.32px] text-[#7a7a7a] whitespace-nowrap">
            https://labclient.<span className="text-[#1a1a1a]">labondemand.com</span>/LabClient/65a761e5-1489-4a81-9633-22a039e88e6e?rc=10
          </div>
        </div>
      </div>
      <div className="h-[2px] bg-[#d0d0d0]" />

      {/* remote session bar */}
      <div className="h-[38px] bg-black flex items-center pl-[28px] pr-[20px] w-[2245px]">
        <svg width="24" height="26" viewBox="0 0 24 26" fill="#fff">
          <path d="M15 0L3 15h7L5 26l15-16h-8z" />
        </svg>
        <svg className="ml-[36px]" width="28" height="26" viewBox="0 0 28 26">
          <rect x="2" y="1" width="24" height="18" fill="none" stroke="#fff" strokeWidth="3" />
          <path d="M10 21h8l1 4H9z" fill="#fff" />
        </svg>
        <div className="ml-auto flex items-end gap-[3px] h-[26px]">
          <div className="w-[6px] h-[10px] bg-white rounded-t-[2px]" />
          <div className="w-[6px] h-[15px] bg-white rounded-t-[2px]" />
          <div className="w-[6px] h-[20px] bg-white rounded-t-[2px]" />
          <div className="w-[6px] h-[26px] bg-white rounded-t-[2px]" />
        </div>
      </div>

      <div className="w-[2245px]">
        <TabBar />
        <AddressBar />
      </div>

      {/* dimmed Fabric page */}
      <div className="h-[1299px] w-[2245px] bg-[#908f91] flex flex-col">
        <div className="h-[98px] flex items-center shrink-0 text-[#3a3a3c]">
          <div className="w-[131px] flex justify-center">
            <div className="grid grid-cols-3 gap-[9px]">
              {[...Array(9)].map((_, i) => (
                <span key={i} className="w-[4px] h-[4px] rounded-full bg-[#2f2f31]" />
              ))}
            </div>
          </div>
          <div className="ml-[17px] text-[27px] tracking-[-0.3px]">Ingest Sales Data</div>
          <div className="ml-[18px]">
            <Line w={24} h={24} sw={1.300} color="#3a3a3c" d="M5 9l7 7 7-7" />
          </div>
          <div className="ml-[60px] w-[934px] h-[62px] rounded-[4px] border-2 border-[#7d7c7f] bg-[#9b999c] flex items-center pl-[22px]">
            <Line w={34} h={34} sw={1.300} color="#3a3a3c">
              <circle cx="10.500" cy="10.500" r="7.500" />
              <path d="M16 16l6 6" />
            </Line>
            <span className="ml-[10px] text-[27px] text-[#56565a]">Search</span>
          </div>
          <div className="ml-[135px] text-[22.5px] leading-[32px] text-[#3e3e40]">
            Trial:
            <br />
            59 days left
          </div>
          <div className="ml-auto flex items-center pr-[13px] gap-[58px]">
            <div className="relative">
              <Line w={40} h={42} sw={1.200} color="#3a3a3c" d="M6 18V10a6 6 0 0 1 12 0v8l2 2H4zM10 20a2 2 0 0 0 4 0" />
              <div className="absolute left-[20px] top-[-16px] w-[30px] h-[30px] rounded-full bg-[#0f6b54] text-white text-[17px] leading-[30px] text-center">1</div>
            </div>
            <Line w={38} h={38} sw={1.200} color="#3a3a3c">
              <circle cx="12" cy="12" r="3" />
              <path d="M10 2h4l.6 3 2.400 1 2.600-1.600 2 3.400-2.300 2v2.400l2.300 2-2 3.400-2.600-1.600-2.400 1-.6 3h-4l-.6-3-2.400-1-2.600 1.600-2-3.400 2.300-2v-2.400l-2.300-2 2-3.400 2.600 1.600 2.400-1z" />
            </Line>
            <Line w={38} h={40} sw={1.200} color="#3a3a3c" d="M12 2v15M6 11l6 6 6-6M4 22h16" />
            <span className="w-[38px] text-[40px] text-center leading-none text-[#3a3a3c] font-light">?</span>
            <Line w={36} h={38} sw={1.200} color="#3a3a3c">
              <circle cx="7" cy="11" r="3" />
              <path d="M2 16h10c0 4-2 6-5 6s-5-2-5-6z" />
              <path d="M11 3h9a2 2 0 0 1 2 2v5h-3l-3 3v-3h-3a2 2 0 0 1-2-2V5a2 2 0 0 1 2-2z" />
            </Line>
            <div className="w-[72px] h-[72px] rounded-full bg-[#6f6e71] flex items-center justify-center ml-[-16px]">
              <Line w={44} h={44} sw={1} color="#a8a7aa">
                <circle cx="12" cy="8" r="5" />
                <path d="M4 22c0-5 3-8 5-9M20 22c0-5-3-8-5-9" />
              </Line>
            </div>
          </div>
        </div>
        <div className="flex-1 flex min-h-0">
          <Sidebar />
          <Workspace />
        </div>
      </div>

      <div className="w-[2245px]">
        <Taskbar />
      </div>

      {/* right edge of the remote window */}
      <div className="absolute right-[3px] top-[133px] bottom-[81px] w-[6px] bg-black" />
      <div className="absolute right-0 bottom-0 w-[9px] h-[81px] bg-black" />
      <div className="absolute right-0 top-[898px] w-[14px] h-[41px] rounded-l-[4px] border-[3px] border-r-0 border-black bg-[#9a989b]" />

      <Dialog />
    </div>
  )
}
